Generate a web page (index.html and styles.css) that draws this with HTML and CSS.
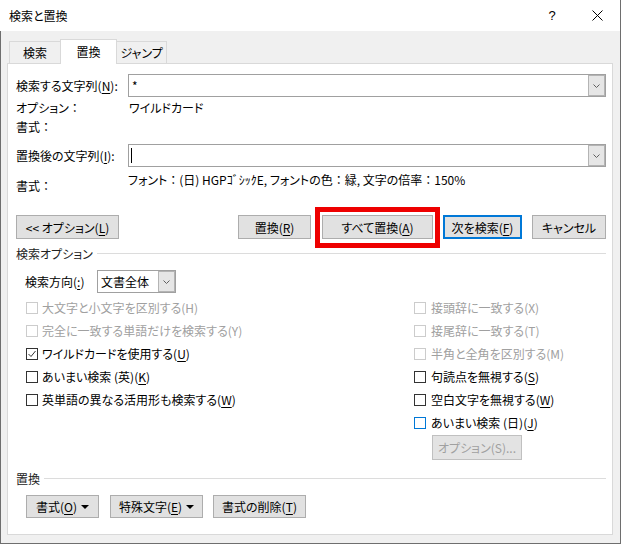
FILE: index.html
```html
<!DOCTYPE html>
<html lang="ja">
<head>
<meta charset="utf-8">
<title>検索と置換</title>
<link rel="stylesheet" href="styles.css">
</head>
<body>
<div class="window">
  <header class="titlebar">
    <span class="title">検索と置換</span>
    <span class="help">?</span>
    <span class="close"><svg width="11" height="11" viewBox="0 0 11 11"><path d="M0.5 0.5L10.5 10.5M10.5 0.5L0.5 10.5" stroke="#000" stroke-width="1" fill="none"/></svg></span>
  </header>
  <div class="client">
    <div class="tabs">
      <div class="tab first">検索</div>
      <div class="tab selected">置換</div>
      <div class="tab last">ジャンプ</div>
    </div>
    <div class="panel">
      <div class="field-row">
        <span class="label">検索する文字列(<u>N</u>):</span>
        <div class="combo">
          <span class="combo-text">*</span>
          <span class="combo-btn"><svg width="7" height="4" viewBox="0 0 7 4"><polyline points="0.5,0.5 3.5,3.5 6.5,0.5" fill="none" stroke="#606060" stroke-width="1"/></svg></span>
        </div>
      </div>
      <div class="info-row first-info"><span>オプション<span class="fw">：</span></span><span>ワイルドカード</span></div>
      <div class="info-row"><span>書式<span class="fw">：</span></span><span></span></div>
      <div class="field-row replace">
        <span class="label">置換後の文字列(<u>I</u>):</span>
        <div class="combo">
          <span class="combo-text"><span class="caret"></span></span>
          <span class="combo-btn"><svg width="7" height="4" viewBox="0 0 7 4"><polyline points="0.5,0.5 3.5,3.5 6.5,0.5" fill="none" stroke="#606060" stroke-width="1"/></svg></span>
        </div>
      </div>
      <div class="format-row">
        <span class="fl">書式<span class="fw">：</span></span>
        <span class="fv">フォント<span class="fw">：</span>(日) HGPｺﾞｼｯｸE, フォントの色<span class="fw">：</span>緑, 文字の倍率<span class="fw">：</span>150%</span>
      </div>
      <div class="button-row">
        <div class="btn w-opt">&lt;&lt; オプション(<u>L</u>)</div>
        <div class="spacer"></div>
        <div class="btn w-rep">置換(<u>R</u>)</div>
        <div class="btn w-all marked">すべて置換(<u>A</u>)</div>
        <div class="btn w-next default">次を検索(<u>F</u>)</div>
        <div class="btn w-cancel">キャンセル</div>
      </div>
      <div class="section"><span>検索オプション</span><span class="rule"></span></div>
      <div class="dir-row">
        <span class="dir-label">検索方向(<u>:</u>)</span>
        <div class="select">
          <span class="select-text">文書全体</span>
          <span class="combo-btn"><svg width="7" height="4" viewBox="0 0 7 4"><polyline points="0.5,0.5 3.5,3.5 6.5,0.5" fill="none" stroke="#606060" stroke-width="1"/></svg></span>
        </div>
      </div>
      <div class="options">
        <div class="col">
          <div class="cb disabled"><span class="box"></span>大文字と小文字を区別する(H)</div>
          <div class="cb disabled"><span class="box"></span>完全に一致する単語だけを検索する(Y)</div>
          <div class="cb"><span class="box"><svg width="10" height="10" viewBox="0 0 10 10"><polyline points="1.5,5 4,7.5 8.5,2" fill="none" stroke="#333" stroke-width="1"/></svg></span>ワイルドカードを使用する(<u>U</u>)</div>
          <div class="cb"><span class="box"></span>あいまい検索 (英)(<u>K</u>)</div>
          <div class="cb"><span class="box"></span>英単語の異なる活用形も検索する(<u>W</u>)</div>
        </div>
        <div class="col right">
          <div class="cb disabled"><span class="box"></span>接頭辞に一致する(X)</div>
          <div class="cb disabled"><span class="box"></span>接尾辞に一致する(T)</div>
          <div class="cb disabled"><span class="box"></span>半角と全角を区別する(M)</div>
          <div class="cb"><span class="box"></span>句読点を無視する(<u>S</u>)</div>
          <div class="cb"><span class="box"></span>空白文字を無視する(<u>W</u>)</div>
          <div class="cb"><span class="box focus"></span>あいまい検索 (日)(<u>J</u>)</div>
          <div class="btn disabled-btn w-sub">オプション(S)...</div>
        </div>
      </div>
      <div class="section second"><span>置換</span><span class="rule"></span></div>
      <div class="bottom-row">
        <div class="btn w-fmt">書式(<u>O</u>)<span class="tri"></span></div>
        <div class="btn w-special">特殊文字(<u>E</u>)<span class="tri"></span></div>
        <div class="btn w-clear">書式の削除(<u>T</u>)</div>
      </div>
    </div>
  </div>
</div>
</body>
</html>
```

FILE: styles.css
```css
* { box-sizing: border-box; }
html, body { margin: 0; padding: 0; }
body {
  width: 622px;
  height: 545px;
  overflow: hidden;
  background: #fff;
  font-family: "Noto Sans CJK JP", "Noto Sans", sans-serif;
  font-size: 12px;
  color: #000;
  font-feature-settings: "palt";
}
u { text-decoration: underline; text-underline-offset: 2px; }
.fw { font-feature-settings: normal; }

.window {
  width: 621px;
  height: 544px;
  border-right: 1px solid #6e6e6e;
  display: flex;
  flex-direction: column;
}

.titlebar {
  height: 31px;
  flex: none;
  background: #fff;
  display: flex;
  align-items: center;
  padding-left: 9px;
  padding-right: 17px;
}
.title { flex: 1; line-height: 16px; }
.help {
  width: 20px;
  text-align: center;
  font-family: "Liberation Sans", sans-serif;
  font-size: 13px;
  margin-right: 30px;
}
.close { display: flex; width: 11px; height: 11px; }

.client {
  flex: 1;
  background: #f0f0f0;
  border-left: 1px solid #6e6e6e;
  border-bottom: 1px solid #6e6e6e;
  padding: 8px 0 0 6px;
}

.tabs {
  height: 24px;
  display: flex;
  align-items: flex-end;
  margin-left: 2px;
}
.tab {
  height: 22px;
  border: 1px solid #d9d9d9;
  border-bottom: none;
  background: #f0f0f0;
  display: flex;
  align-items: center;
  justify-content: center;
}
.tab.first { width: 51px; border-right: none; }
.tab.selected {
  width: 57px;
  height: 25px;
  margin-bottom: -1px;
  background: #fff;
  position: relative;
  z-index: 1;
  padding-bottom: 1px;
}
.tab.last { width: 50px; border-left: none; }

.panel {
  width: 606px;
  height: 472px;
  background: #fff;
  border: 1px solid #d9d9d9;
  padding: 10px 6px 0 8px;
  display: flex;
  flex-direction: column;
}

.field-row {
  display: grid;
  grid-template-columns: 112px 1fr;
  align-items: center;
  height: 23px;
}
.field-row.replace { margin-top: 8px; }
.combo {
  height: 23px;
  border: 1px solid #a0a0a0;
  display: flex;
  background: #fff;
}
.combo-text {
  flex: 1;
  padding-left: 3px;
  line-height: 19px;
  display: flex;
  align-items: center;
}
.caret {
  display: block;
  width: 1px;
  height: 15px;
  background: #000;
  margin-left: -1px;
}
.combo-btn {
  width: 17px;
  flex: none;
  background: #e6e6e6;
  border: 1px solid #b4b4b4;
  display: flex;
  align-items: center;
  justify-content: center;
}

.info-row {
  display: grid;
  grid-template-columns: 113px 1fr;
  height: 19px;
  line-height: 19px;
}
.info-row.first-info { margin-top: 1px; }

.format-row {
  display: grid;
  grid-template-columns: 112px 1fr;
  height: 28px;
}
.fl { padding-top: 10px; line-height: 18px; }
.fv { padding-top: 4px; line-height: 18px; white-space: nowrap; }

.button-row {
  display: flex;
  margin-top: 20px;
  height: 24px;
}
.spacer { flex: 1; }
.btn {
  height: 24px;
  border: 1px solid #adadad;
  background: #e1e1e1;
  display: flex;
  align-items: center;
  justify-content: center;
  white-space: nowrap;
}
.w-opt { width: 103px; }
.w-rep { width: 73px; }
.w-all { width: 111px; margin-left: 11px; }
.w-next { width: 79px; margin-left: 10px; }
.w-cancel { width: 74px; margin-left: 10px; }
.btn.default { border: 2px solid #0078d7; }
.btn.marked { position: relative; }
.btn.marked::after {
  content: "";
  position: absolute;
  left: -8px;
  right: -8px;
  top: -9px;
  bottom: -10px;
  border: 5px solid #ee0000;
}

.section {
  display: flex;
  align-items: center;
  height: 18px;
  margin-top: 5px;
  color: #222;
}
.section .rule {
  flex: 1;
  border-top: 1px solid #dcdcdc;
  margin-left: 4px;
}
.section.second { margin-top: 9px; }

.dir-row {
  display: flex;
  align-items: center;
  height: 23px;
  margin-top: 8px;
  padding-left: 9px;
}
.dir-label { width: 72px; }
.select {
  width: 79px;
  height: 23px;
  border: 1px solid #a0a0a0;
  display: flex;
  background: #fff;
}
.select-text { flex: 1; padding-left: 3px; line-height: 21px; }

.options {
  display: grid;
  grid-template-columns: 388px 1fr;
  margin-top: 3px;
  padding-left: 10px;
}
.col { display: flex; flex-direction: column; }
.cb {
  display: flex;
  align-items: center;
  height: 23px;
  white-space: nowrap;
}
.box {
  width: 12px;
  height: 12px;
  flex: none;
  border: 1px solid #333;
  background: #fff;
  margin-right: 4px;
  display: flex;
  align-items: center;
  justify-content: center;
}
.right .box { margin-right: 5px; }
.cb.disabled { color: #a0a0a0; }
.cb.disabled .box { border-color: #cccccc; }
.box.focus { border-color: #0078d7; }
.w-sub {
  width: 90px;
  height: 25px;
  margin-left: 18px;
  margin-top: 1px;
}
.btn.disabled-btn {
  background: #e3e3e3;
  border-color: #c0c0c0;
  color: #a0a0a0;
}

.bottom-row {
  display: flex;
  margin-top: 8px;
  padding-left: 10px;
}
.bottom-row .btn { height: 23px; }
.w-fmt { width: 73px; }
.w-special { width: 93px; margin-left: 11px; }
.w-clear { width: 93px; margin-left: 10px; }
.tri {
  width: 0;
  height: 0;
  border-left: 4px solid transparent;
  border-right: 4px solid transparent;
  border-top: 4px solid #000;
  margin-left: 4px;
}
```
